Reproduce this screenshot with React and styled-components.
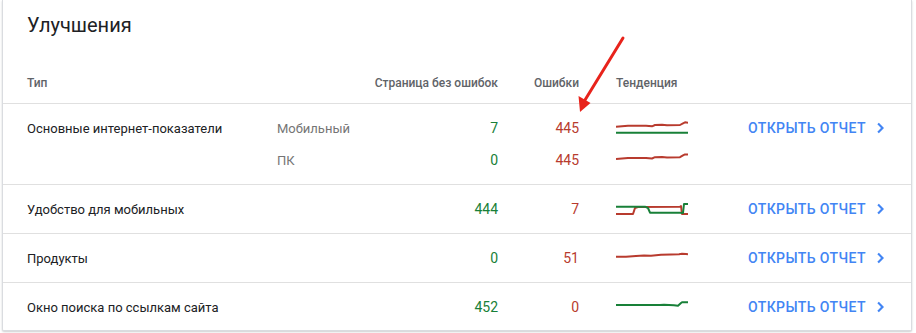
import React from 'react';
import styled, { createGlobalStyle } from 'styled-components';

const GlobalStyle = createGlobalStyle`
  html, body {
    margin: 0;
    padding: 0;
    background: #ffffff;
  }
  body {
    font-family: Roboto, "Noto Sans", Arial, sans-serif;
    color: #202124;
  }
`;

const Page = styled.div`
  padding: 0 2px 2px 2px;
`;

const Card = styled.div`
  position: relative;
  width: 910px;
  height: 331px;
  box-sizing: border-box;
  border: 1px solid #dadce0;
  border-top: none;
  border-radius: 0 0 2px 2px;
  box-shadow: 0 1px 2px rgba(60, 64, 67, 0.25);
  background: #fff;
`;

const Title = styled.h2`
  margin: 0;
  padding: 11px 0 0 24px;
  height: 28px;
  line-height: 28px;
  font-size: 20px;
  font-weight: 400;
  color: #202124;
`;

const COLUMNS = '250px 121px 100px 81px 169px 1fr';

const HeaderRow = styled.div`
  display: grid;
  grid-template-columns: ${COLUMNS};
  align-items: center;
  height: 40px;
  margin-top: 24px;
  padding-left: 24px;
  border-bottom: 1px solid #e0e0e0;
  font-size: 12px;
  font-weight: 500;
  color: #5f6368;
`;

const HeadCell = styled.div`
  text-align: ${p => (p.$right ? 'right' : 'left')};
  padding-left: ${p => p.$pad || 0}px;
  grid-column: ${p => p.$span || 'auto'};
  white-space: nowrap;
`;

const Group = styled.div`
  padding: 8px 0;
  border-bottom: ${p => (p.$last ? 'none' : '1px solid #e0e0e0')};
`;

const Line = styled.div`
  display: grid;
  grid-template-columns: ${COLUMNS};
  align-items: center;
  height: 32px;
  padding-left: 24px;
  font-size: 13px;
`;

const TypeName = styled.div`
  color: #202124;
  white-space: nowrap;
`;

const Device = styled.div`
  color: #757575;
`;

const Count = styled.div`
  text-align: right;
  font-size: 14px;
  color: ${p => p.$color};
`;

const Trend = styled.div`
  padding-left: 37px;
  display: flex;
  align-items: center;
`;

const Link = styled.a`
  display: flex;
  align-items: center;
  gap: 5px;
  color: #4285f4;
  font-size: 14px;
  font-weight: 500;
  letter-spacing: 0.4px;
  text-decoration: none;
  white-space: nowrap;
  cursor: pointer;
`;

const Arrow = styled.svg`
  position: absolute;
  left: 0;
  top: 0;
  pointer-events: none;
`;

const GREEN = '#188038';
const RED = '#b83b2e';

const Spark = ({ lines }) => (
  <svg width="72" height="16" viewBox="0 0 72 16">
    {lines.map((l, i) => (
      <polyline
        key={i}
        points={l.pts}
        fill="none"
        stroke={l.color}
        strokeWidth="2"
        strokeLinejoin="round"
      />
    ))}
  </svg>
);

const Chevron = () => (
  <svg width="20" height="20" viewBox="0 0 24 24" fill="#4285f4">
    <path d="M9.4 5.8L7.6 7.6 12 12l-4.4 4.4 1.8 1.8 6.2-6.2z" />
  </svg>
);

const groups = [
  {
    name: 'Основные интернет-показатели',
    lines: [
      {
        device: 'Мобильный', ok: 7, err: 445,
        spark: [
          { color: RED, pts: '0,6.7 12,5.7 30,5.7 36,6.3 39,5 46,4.7 51,5.3 64,5 67,3.3 69,2.3 72,2.7' },
          { color: GREEN, pts: '0,12.7 72,12.7' },
        ],
      },
      {
        device: 'ПК', ok: 0, err: 445,
        spark: [{ color: RED, pts: '0,7 12,6 30,6 36,6.5 39,5.2 46,5 51,5.5 64,5.2 67,3.4 69,2.4 72,2.6' }],
      },
    ],
  },
  {
    name: 'Удобство для мобильных',
    lines: [
      {
        ok: 444, err: 7,
        spark: [
          { color: RED, pts: '0,13 17,13 19,7 22,6 64,5.7 65,5 66,13 72,13' },
          { color: GREEN, pts: '0,5.7 29,5.7 32,7 34,11.7 64,11.7 67,12 68,3 72,3' },
        ],
      },
    ],
  },
  {
    name: 'Продукты',
    lines: [
      {
        ok: 0, err: 51,
        spark: [{ color: RED, pts: '0,6.7 10,6.7 20,6 28,5.5 35,5.7 45,4.8 55,4.5 63,4.2 66,3.8 70,4 72,4.3' }],
      },
    ],
  },
  {
    name: 'Окно поиска по ссылкам сайта',
    lines: [
      {
        ok: 452, err: 0,
        spark: [{ color: GREEN, pts: '0,6 44,6 48,5.7 58,6.3 62,6.7 65,4 66,3.3 72,3.3' }],
      },
    ],
  },
];

export default function App() {
  return (
    <>
      <GlobalStyle />
      <Page>
        <Card>
          <Title>Улучшения</Title>
          <HeaderRow>
            <HeadCell>Тип</HeadCell>
            <HeadCell $right $span="2 / span 2">Страница без ошибок</HeadCell>
            <HeadCell $right>Ошибки</HeadCell>
            <HeadCell $pad={37}>Тенденция</HeadCell>
          </HeaderRow>
          {groups.map((g, gi) => (
            <Group key={g.name} $last={gi === groups.length - 1}>
              {g.lines.map((l, li) => (
                <Line key={li}>
                  <TypeName>{li === 0 ? g.name : ''}</TypeName>
                  <Device>{l.device || ''}</Device>
                  <Count $color={GREEN}>{l.ok}</Count>
                  <Count $color={RED}>{l.err}</Count>
                  <Trend>
                    <Spark lines={l.spark} />
                  </Trend>
                  {li === 0 ? (
                    <Link>
                      ОТКРЫТЬ ОТЧЕТ
                      <Chevron />
                    </Link>
                  ) : (
                    <div />
                  )}
                </Line>
              ))}
            </Group>
          ))}
          <Arrow width="910" height="331" viewBox="0 0 910 331">
            <line x1="620" y1="38" x2="582" y2="100" stroke="#e8231b" strokeWidth="3" strokeLinecap="round" />
            <polygon points="577,112 575.5,96 587.5,103" fill="#e8231b" />
          </Arrow>
        </Card>
      </Page>
    </>
  );
}
